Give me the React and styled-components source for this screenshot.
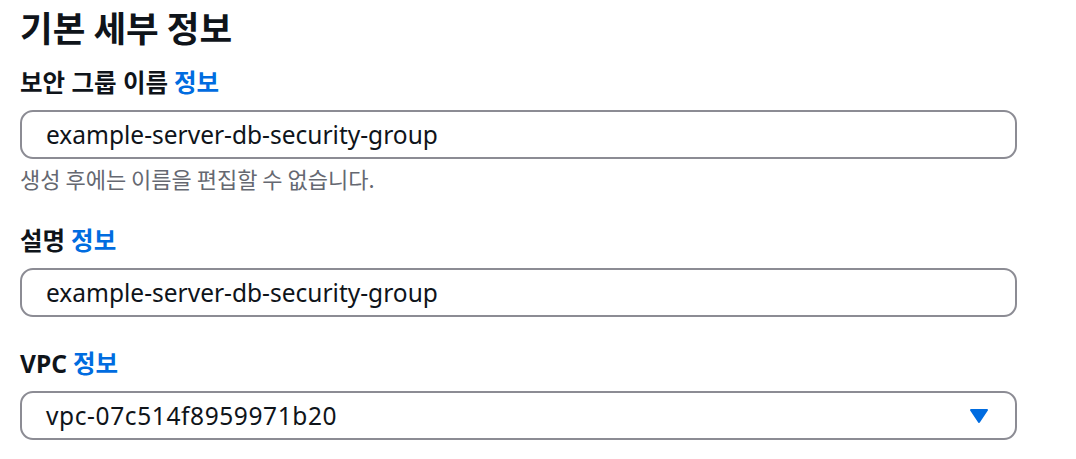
import React from 'react';
import styled, { createGlobalStyle } from 'styled-components';

const GlobalStyle = createGlobalStyle`
  body {
    margin: 0;
    background: #ffffff;
    font-family: "Noto Sans", "Noto Sans CJK KR", sans-serif;
    color: #0f141a;
  }
`;

const Page = styled.div`
  padding: 5px 59px 0 20px;
`;

const Title = styled.h1`
  margin: 0;
  font-size: 35.5px;
  line-height: 44px;
  font-weight: 700;
  font-family: "Noto Sans CJK KR", "Noto Sans", sans-serif;
`;

const Field = styled.div`
  margin-top: ${props => props.gap}px;
`;

const Label = styled.div`
  font-size: 24.5px;
  line-height: 30px;
  font-weight: 700;
  font-family: "Noto Sans", "Noto Sans CJK KR", sans-serif;
  margin-bottom: 12px;
`;

const InfoLink = styled.a`
  color: #006ce0;
  margin-left: 6px;
  text-decoration: none;
`;

const Input = styled.div`
  box-sizing: border-box;
  height: 49px;
  border: 2.5px solid #8c8c94;
  border-radius: 13px;
  padding: 0 26px 0 24px;
  display: flex;
  align-items: center;
  justify-content: space-between;
  font-family: "Noto Sans", sans-serif;
  font-size: 24.5px;
  color: #0f141a;
`;

const Value = styled.span`
  letter-spacing: ${props => props.spacing || 0}px;
`;

const Hint = styled.div`
  margin-top: 5px;
  font-size: 22px;
  line-height: 28px;
  color: #656871;
  font-family: "Noto Sans CJK KR", "Noto Sans", sans-serif;
`;

const Caret = () => (
  <svg width="20" height="16" viewBox="0 0 20 16">
    <path d="M2 2 L18 2 L10 14 Z" fill="#006ce0" stroke="#006ce0" strokeWidth="2" strokeLinejoin="round" />
  </svg>
);

const App = () => (
  <>
    <GlobalStyle />
    <Page>
      <Title>기본 세부 정보</Title>
      <Field gap={19}>
        <Label>보안 그룹 이름<InfoLink>정보</InfoLink></Label>
        <Input><Value>example-server-db-security-group</Value></Input>
        <Hint>생성 후에는 이름을 편집할 수 없습니다.</Hint>
      </Field>
      <Field gap={34}>
        <Label>설명<InfoLink>정보</InfoLink></Label>
        <Input><Value>example-server-db-security-group</Value></Input>
      </Field>
      <Field gap={32}>
        <Label>VPC<InfoLink>정보</InfoLink></Label>
        <Input>
          <Value spacing={0.6}>vpc-07c514f8959971b20</Value>
          <Caret />
        </Input>
      </Field>
    </Page>
  </>
);

export default App;
